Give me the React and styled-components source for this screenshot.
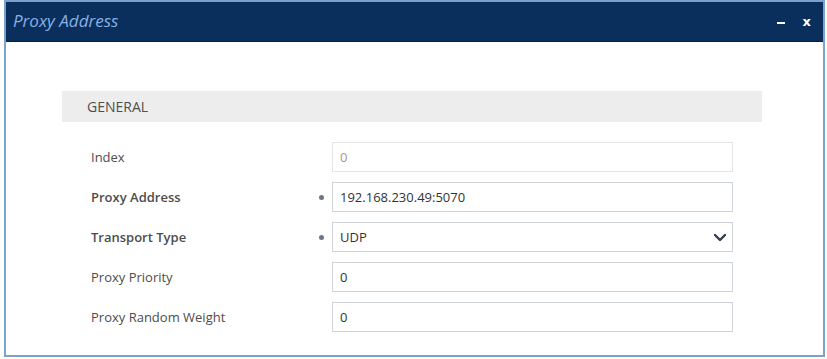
import React from "react";
import styled, { createGlobalStyle } from "styled-components";

const Global = createGlobalStyle`
  html, body { margin: 0; padding: 0; background: #fff; }
  body { font-family: "Open Sans", "Liberation Sans", sans-serif; }
`;

const Window = styled.div`
  margin-left: 4px;
  width: 821px;
  height: 357px;
  box-sizing: border-box;
  border: 2px solid #7ba2cd;
  display: flex;
  flex-direction: column;
  background: #fff;
`;

const TitleBar = styled.div`
  height: 40px;
  background: #0b2f5c;
  border-bottom: 1px solid #06203f;
  box-sizing: border-box;
  display: flex;
  align-items: center;
  padding: 0 12px 0 7px;
`;

const Title = styled.div`
  flex: 1;
  color: #86b1e6;
  font-style: italic;
  font-size: 17px;
  margin-top: -2px;
`;

const MinBtn = styled.span`
  width: 8px;
  height: 2px;
  background: #fff;
  margin-top: 3px;
`;

const CloseBtn = styled.span`
  color: #fff;
  font-weight: 700;
  font-size: 13px;
  margin-left: 18px;
  font-family: "DejaVu Sans", sans-serif;
`;

const Body = styled.div`
  flex: 1;
  padding: 49px 61px 0 56px;
`;

const SectionHeader = styled.div`
  height: 31px;
  background: #ededed;
  display: flex;
  align-items: center;
  padding-left: 25px;
  font-size: 14px;
  color: #4f4f4f;
`;

const Rows = styled.div`
  display: flex;
  flex-direction: column;
  gap: 10px;
  padding: 20px 29px 0 29px;
`;

const Row = styled.div`
  display: grid;
  grid-template-columns: 227px 14px 1fr;
  align-items: center;
  height: 30px;
`;

const Label = styled.div`
  font-size: 13px;
  color: #4d4d4d;
  font-weight: ${(p) => (p.$bold ? 600 : 400)};
`;

const Dot = styled.span`
  width: 5px;
  height: 5px;
  border-radius: 50%;
  background: #6d7686;
  justify-self: start;
  margin-left: 1px;
`;

const Field = styled.div`
  grid-column: 3;
  height: 30px;
  box-sizing: border-box;
  border: 1px solid ${(p) => (p.$disabled ? "#e2e4e8" : "#cfd3da")};
  display: flex;
  align-items: center;
  padding: 0 5px 0 7px;
  font-size: 13px;
  color: ${(p) => (p.$disabled ? "#9a9a9a" : "#333")};
  background: #fff;
`;

const Value = styled.span`
  flex: 1;
`;

const Chevron = () => (
  <svg width="14" height="9" viewBox="0 0 14 9">
    <path d="M2 2 L7 7 L12 2" stroke="#2f3a4a" strokeWidth="2.4" fill="none" strokeLinecap="round" strokeLinejoin="round" />
  </svg>
);

const rows = [
  { label: "Index", value: "0", disabled: true },
  { label: "Proxy Address", value: "192.168.230.49:5070", bold: true, req: true },
  { label: "Transport Type", value: "UDP", bold: true, req: true, select: true },
  { label: "Proxy Priority", value: "0" },
  { label: "Proxy Random Weight", value: "0" },
];

export default function App() {
  return (
    <>
      <Global />
      <Window>
        <TitleBar>
          <Title>Proxy Address</Title>
          <MinBtn />
          <CloseBtn>x</CloseBtn>
        </TitleBar>
        <Body>
          <SectionHeader>GENERAL</SectionHeader>
          <Rows>
            {rows.map((r) => (
              <Row key={r.label}>
                <Label $bold={r.bold}>{r.label}</Label>
                {r.req ? <Dot /> : <span />}
                <Field $disabled={r.disabled}>
                  <Value>{r.value}</Value>
                  {r.select && <Chevron />}
                </Field>
              </Row>
            ))}
          </Rows>
        </Body>
      </Window>
    </>
  );
}
